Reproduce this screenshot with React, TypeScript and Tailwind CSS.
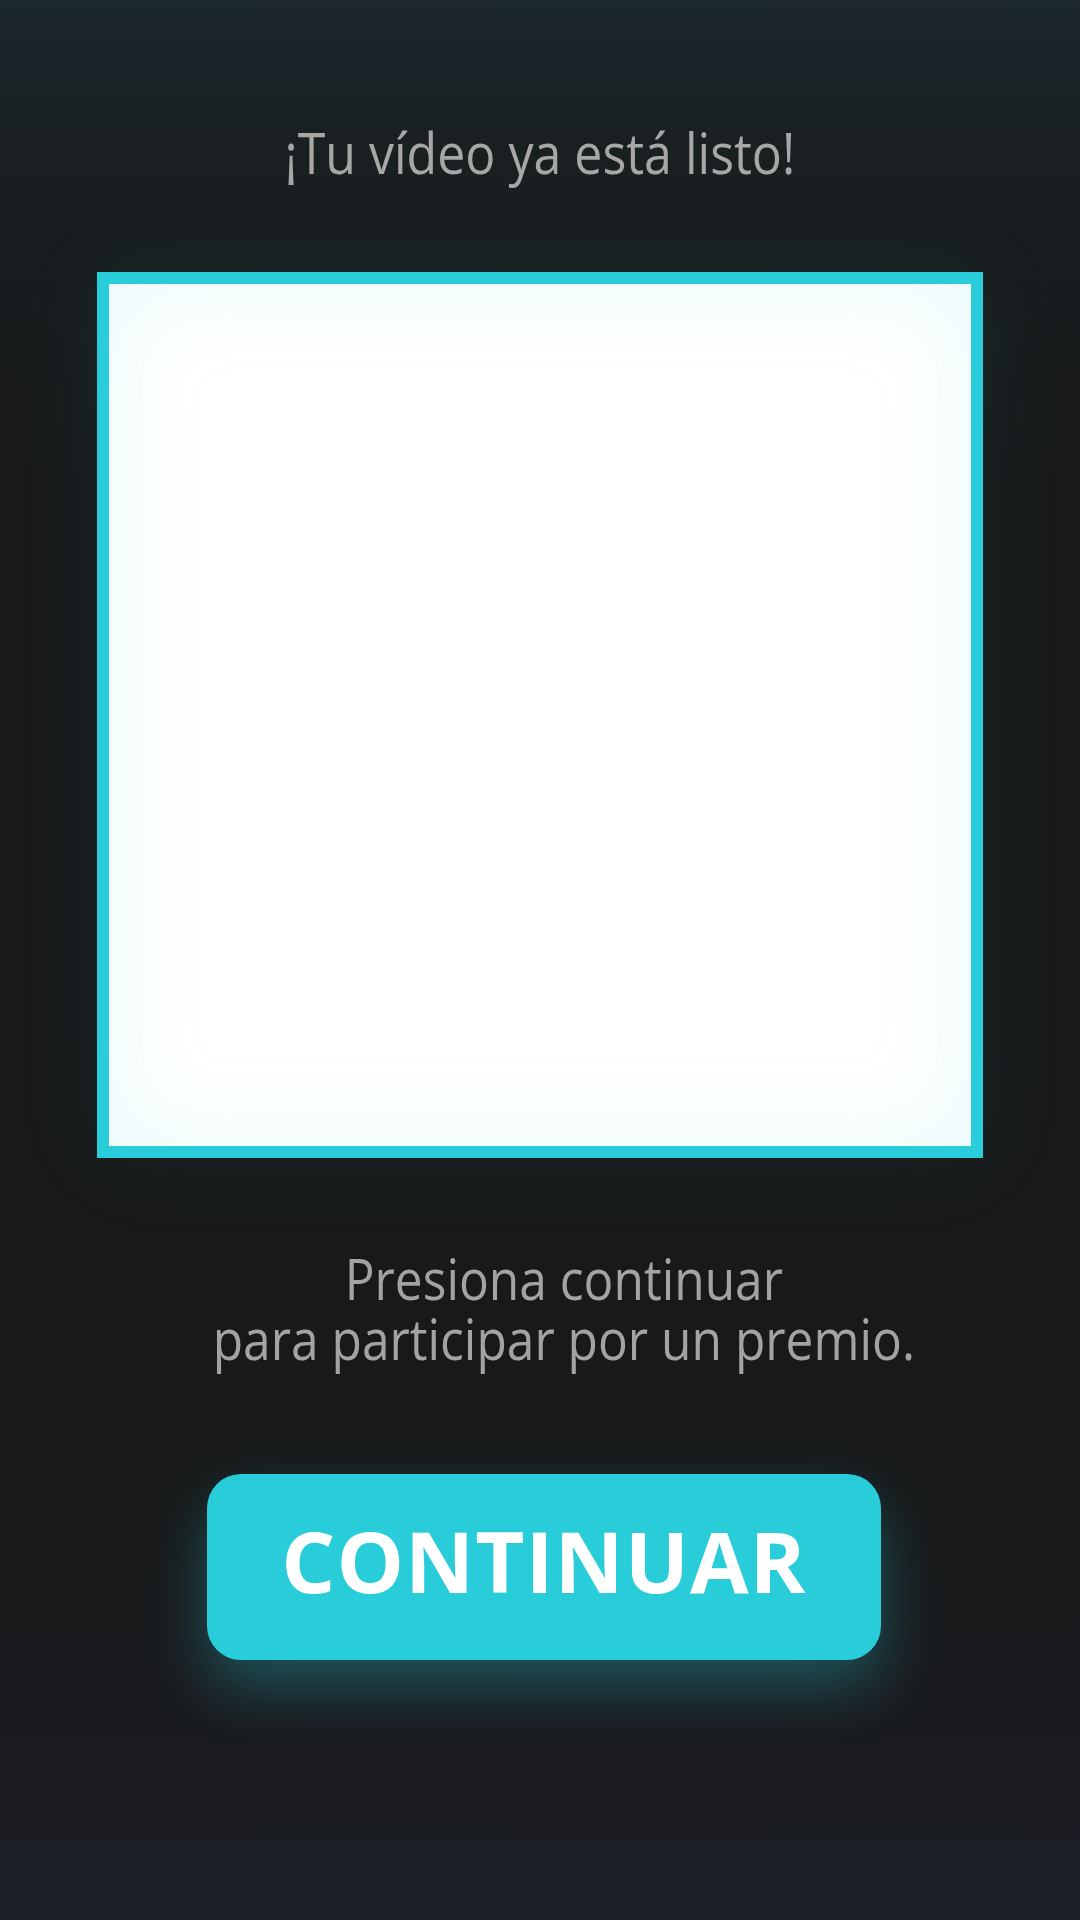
import React from "react";

export default function App() {
  return (
    <div className="relative w-[1080px] h-[1920px] overflow-hidden bg-[linear-gradient(180deg,#1b282e_0px,#1a1f21_150px,#18191a_500px,#18191a_1500px,#1a1c20_1750px,#1c1f27_1920px)] flex flex-col items-center" style={{ fontFamily: '"Open Sans", "Noto Sans", sans-serif' }}>
      <h1 className="pt-[118px] text-[57px] leading-[68px] font-normal text-[#a7a7a7] scale-x-[0.878] whitespace-nowrap">
        ¡Tu vídeo ya está listo!
      </h1>
      <div className="mt-[86px] w-[886px] h-[886px] border-[12px] border-[#29cdd9] bg-white shadow-[0_0_90px_rgba(41,205,217,0.07)]">
        <div className="w-full h-full shadow-[inset_0_0_100px_rgba(41,205,217,0.10)]" />
      </div>
      <div className="mt-[90px] ml-[48px] flex flex-col items-center text-[56px] leading-[60px] text-[#a3a3a3] scale-x-[0.887] whitespace-nowrap">
        <p>Presiona continuar</p>
        <p>para participar por un premio.</p>
      </div>
      <button className="mt-[106px] ml-[8px] w-[674px] h-[186px] rounded-[34px] bg-[#29cdd9] flex items-center justify-center pb-[14px] shadow-[0_26px_60px_rgba(41,205,217,0.32)]">
        <span className="text-[85px] leading-[85px] font-bold text-white tracking-[1px]">CONTINUAR</span>
      </button>
    </div>
  );
}
